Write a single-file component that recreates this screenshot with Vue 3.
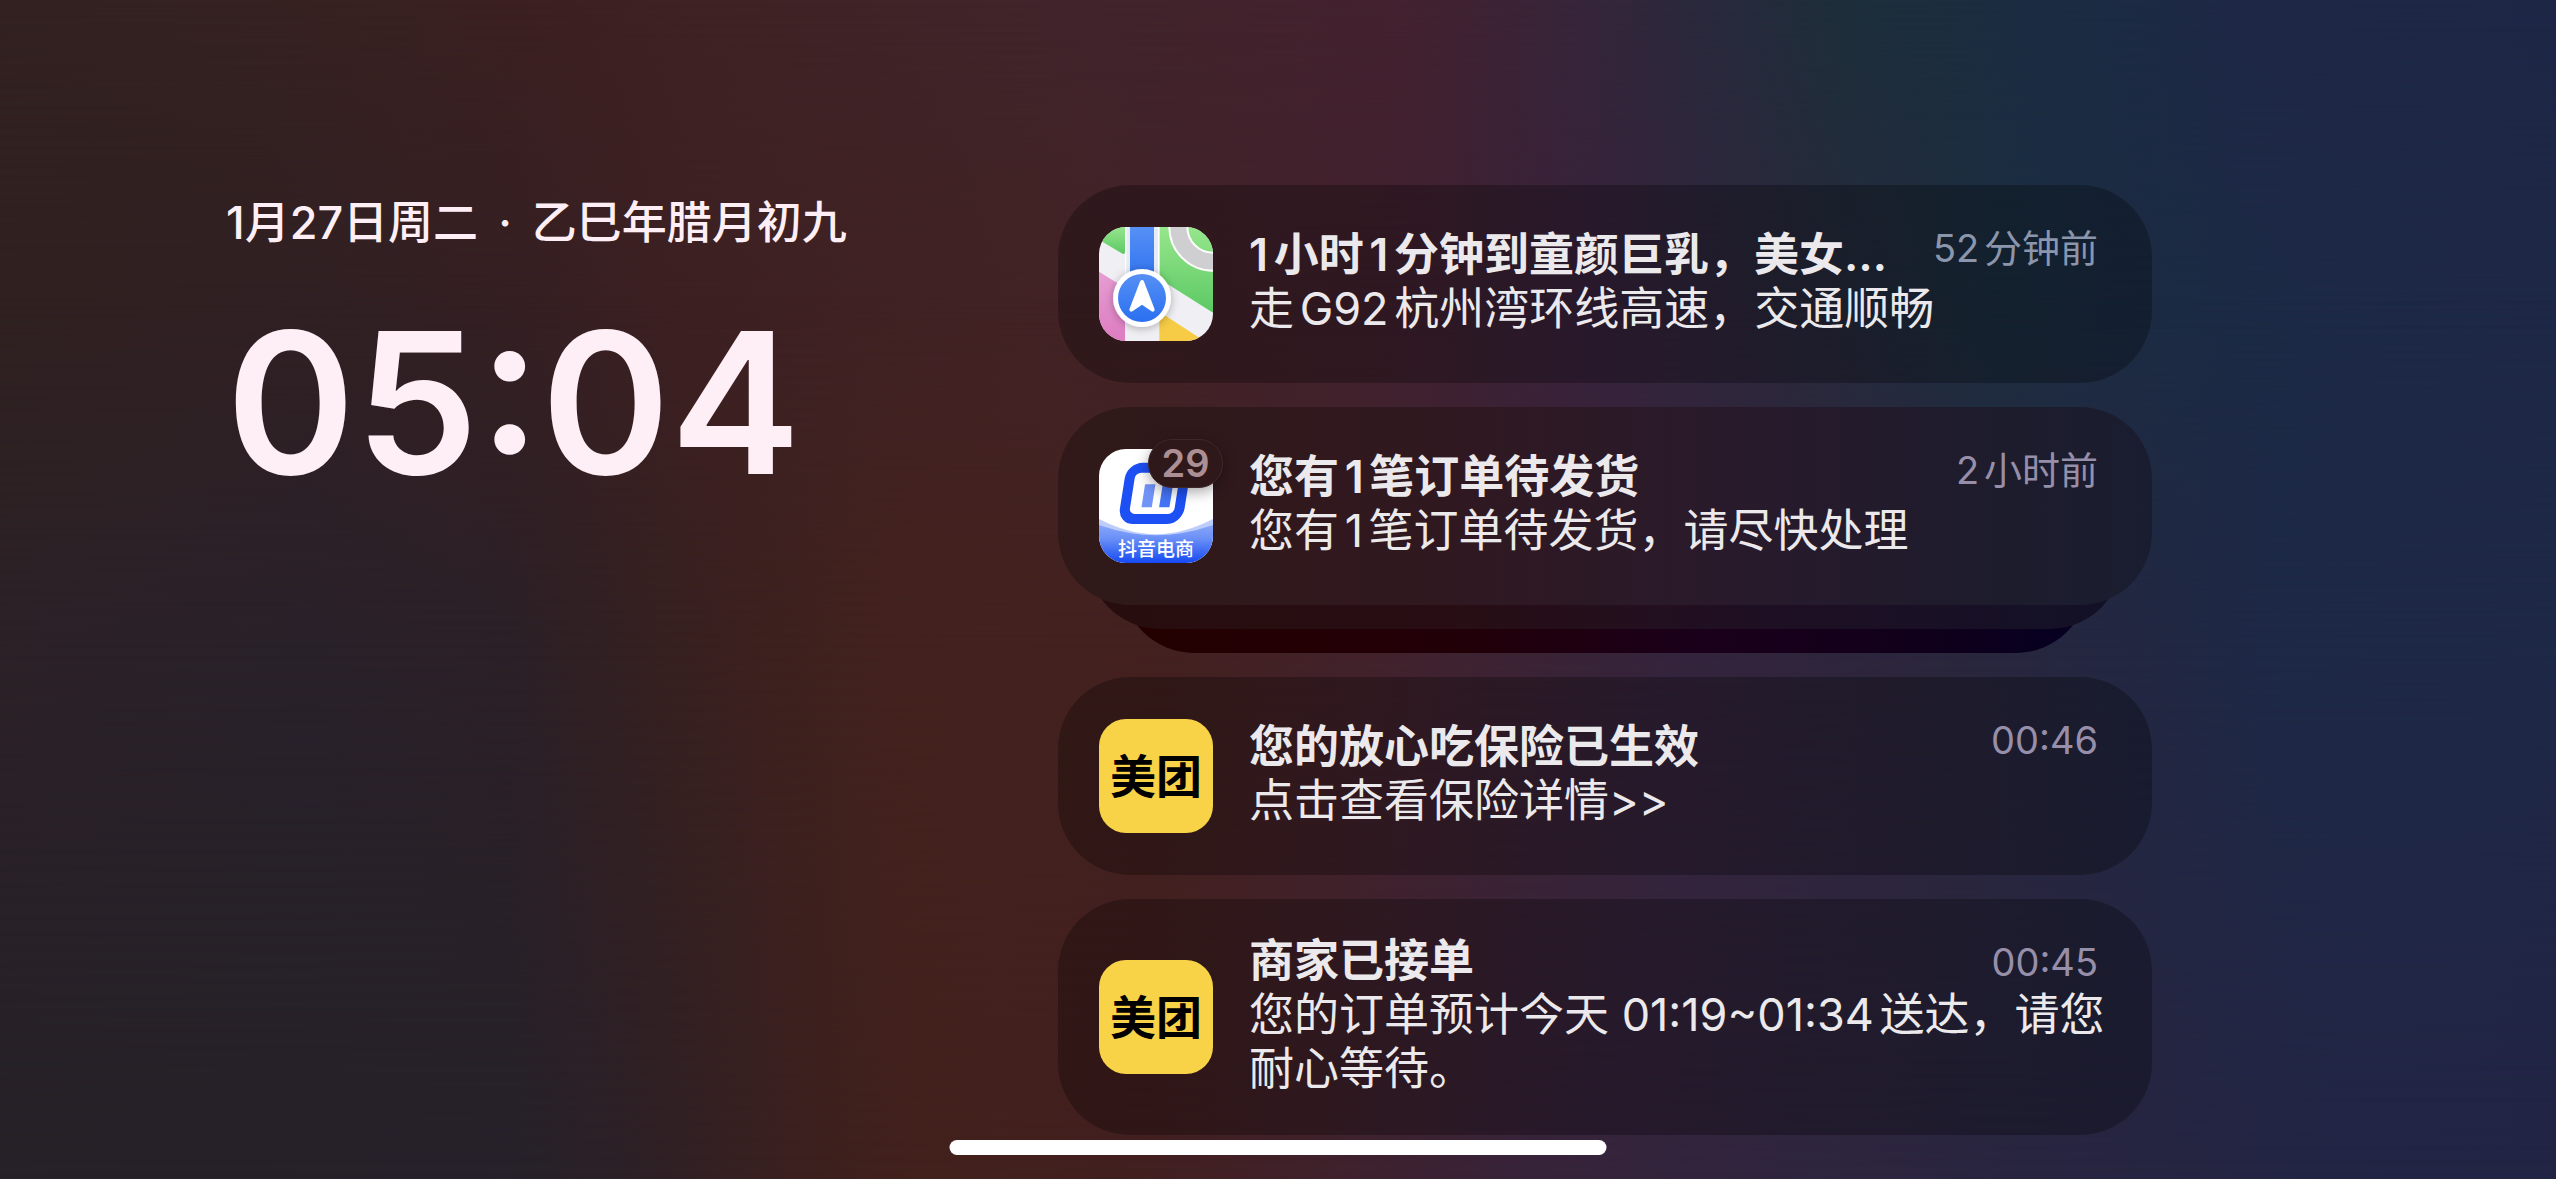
<script setup>
const notifications = [
  {
    id: 1,
    app: 'maps',
    appName: '地图',
    title: '1小时1分钟到童颜巨乳，美女…',
    body: '走G92杭州湾环线高速，交通顺畅',
    time: '52分钟前',
  },
  {
    id: 2,
    app: 'shop',
    appName: '抖音电商',
    title: '您有1笔订单待发货',
    body: '您有1笔订单待发货，请尽快处理',
    time: '2小时前',
    count: 29,
  },
  {
    id: 3,
    app: 'meituan',
    appName: '美团',
    title: '您的放心吃保险已生效',
    body: '点击查看保险详情>>',
    time: '00:46',
  },
  {
    id: 4,
    app: 'meituan',
    appName: '美团',
    title: '商家已接单',
    body: '您的订单预计今天 01:19~01:34送达，请您耐心等待。',
    time: '00:45',
  },
];
</script>

<template>
  <main class="lock">
    <div class="wallpaper" aria-hidden="true">
      <div class="wallpaper__band wallpaper__band--bottom"></div>
      <div class="wallpaper__band wallpaper__band--middle"></div>
      <div class="wallpaper__band wallpaper__band--upper"></div>
      <div class="wallpaper__band wallpaper__band--top"></div>
    </div>

    <header class="clock">
      <p class="clock__date">1月27日周二 <span class="clock__dot">·</span> 乙巳年腊月初九</p>
      <h1 class="clock__time">05:04</h1>
    </header>

    <section class="list" aria-label="通知">
      <div v-for="item in notifications" :key="item.id" class="group" :class="{ 'group--stacked': item.count }">
        <article class="card">
          <div class="card__icon">
            <svg v-if="item.app === 'maps'" class="icon" viewBox="0 0 342 342" role="img" :aria-label="item.appName">
              <defs>
                <linearGradient id="green" x1="0" y1="0" x2="0" y2="1">
                  <stop offset="0" stop-color="#97e68c" />
                  <stop offset="1" stop-color="#5cc964" />
                </linearGradient>
                <linearGradient id="pink" x1="0" y1="0" x2="0" y2="1">
                  <stop offset="0" stop-color="#e79dd2" />
                  <stop offset="1" stop-color="#dd7cc2" />
                </linearGradient>
                <linearGradient id="blue" x1="0" y1="0" x2="0" y2="1">
                  <stop offset="0" stop-color="#5690f5" />
                  <stop offset="1" stop-color="#2a6ff1" />
                </linearGradient>
                <filter id="shade" x="-30%" y="-30%" width="160%" height="160%">
                  <feDropShadow dx="0" dy="4" stdDeviation="12" flood-color="#000" flood-opacity="0.3" />
                </filter>
              </defs>
              <rect width="342" height="342" fill="#f0f0f4" />
              <path d="M0 0H78V74Q78 84 68 79L0 38Z" fill="url(#green)" />
              <path d="M0 134L78 182V342H0Z" fill="url(#pink)" />
              <path d="M181 0H342V257L181 155Z" fill="url(#green)" />
              <path d="M181 254L316 342H181Z" fill="#f6cc46" />
              <circle cx="342" cy="0" r="104" fill="none" stroke="#fff" stroke-width="60" />
              <circle cx="342" cy="0" r="104" fill="none" stroke="#cfcfd2" stroke-width="48" />
              <rect x="78" width="103" height="180" fill="#e6ecf7" />
              <rect x="78" width="4" height="180" fill="#fff" />
              <rect x="177" width="4" height="180" fill="#fff" />
              <rect x="93" width="72" height="180" fill="url(#blue)" />
              <circle cx="129" cy="213" r="87" fill="#fff" filter="url(#shade)" />
              <circle cx="129" cy="213" r="72" fill="url(#blue)" />
              <path
                d="M129 165L97 248L129 226L161 248Z"
                fill="#fff"
                stroke="#fff"
                stroke-width="12"
                stroke-linejoin="round"
              />
            </svg>
            <svg v-else-if="item.app === 'shop'" class="icon" viewBox="0 0 342 342" role="img" :aria-label="item.appName">
              <defs>
                <linearGradient id="wave" x1="0" y1="0" x2="0" y2="1">
                  <stop offset="0" stop-color="#88a6f8" />
                  <stop offset="0.35" stop-color="#6b90f7" />
                  <stop offset="1" stop-color="#164af2" />
                </linearGradient>
              </defs>
              <rect width="342" height="342" fill="#fff" />
              <path d="M0 210Q90 256 171 256T342 210V342H0Z" fill="#bccdfb" />
              <path d="M0 228Q90 259 171 259T342 228V342H0Z" fill="url(#wave)" />
              <g transform="translate(167 133) skewX(-9)">
                <rect x="-82" y="-77" width="164" height="154" rx="32" fill="none" stroke="#1d50f4" stroke-width="30" />
                <rect x="-33" y="-27" width="31" height="69" fill="#7194f7" />
                <rect x="20" y="-27" width="31" height="69" fill="#4474f6" />
              </g>
              <text class="icon__shop" x="171" y="321" text-anchor="middle">抖音电商</text>
            </svg>
            <svg v-else class="icon" viewBox="0 0 342 342" role="img" :aria-label="item.appName">
              <rect width="342" height="342" fill="#f8d247" />
              <text class="icon__meituan" x="171" y="221" text-anchor="middle">美团</text>
            </svg>
            <span v-if="item.count" class="badge">{{ item.count }}</span>
          </div>
          <div class="card__text">
            <h2 class="card__title">{{ item.title }}</h2>
            <p class="card__body">{{ item.body }}</p>
          </div>
          <time class="card__time" :class="{ 'card__time--cool': item.app === 'maps' }">{{ item.time }}</time>
        </article>
        <template v-if="item.count">
          <div class="layer layer--second"></div>
          <div class="layer layer--third"></div>
        </template>
      </div>
    </section>

    <div class="home-indicator"></div>
  </main>
</template>

<style>
body {
  margin: 0;
  background: #2b2127;
}
</style>

<style scoped>
.lock {
  position: relative;
  isolation: isolate;
  box-sizing: border-box;
  min-height: 100vh;
  padding: 185px 404px 44px 226px;
  display: grid;
  grid-template-columns: minmax(0, 832fr) minmax(0, 1094fr);
  align-items: start;
  font-family: Inter, 'Noto Sans CJK SC', sans-serif;
  text-autospace: normal;
  overflow: hidden;
}

.wallpaper {
  position: absolute;
  inset: 0;
  z-index: -1;
}

.wallpaper__band {
  position: absolute;
  inset: 0;
}

.wallpaper__band--bottom {
  background: linear-gradient(90deg, #262128 0%, #26212a 20%, #2d2026 25%, #3b201f 31%, #42211c 36%, #421f20 45%, #40212a 51%, #37233a 60%, #2f253e 70%, #282540 80%, #232544 90%, #222444 100%);
}

.wallpaper__band--middle {
  background: linear-gradient(90deg, #2b2127 0%, #29212a 12%, #2b2027 20%, #38201f 27%, #43221e 35%, #432120 46%, #42222c 54%, #35243c 65%, #2a263c 76%, #222742 84%, #1d2946 89%, #1e2847 100%);
  mask-image: linear-gradient(180deg, #000 55%, transparent 100%);
}

.wallpaper__band--upper {
  background: linear-gradient(90deg, #302120 0%, #302023 12%, #341f22 20%, #3d2022 27%, #422324 40%, #41212e 54%, #38223c 62%, #28293b 71%, #1b2e40 78%, #1c2a45 88%, #1e2847 100%);
  mask-image: linear-gradient(180deg, #000 25%, transparent 55%);
}

.wallpaper__band--top {
  background: linear-gradient(90deg, #332121 0%, #352121 10%, #3b2021 20%, #3f2224 28%, #40242a 40%, #43212f 55%, #36253a 62%, #28293c 67%, #1d2e3a 72%, #1b2c42 80%, #1e2846 88%, #1e2646 100%);
  mask-image: linear-gradient(180deg, #000 0%, transparent 28%);
}

.clock {
  padding-top: 11px;
  color: #fdeff5;
}

.clock__date {
  margin: 0;
  font-size: 45px;
  line-height: 54px;
  font-weight: 500;
  text-autospace: no-autospace;
}

.clock__dot {
  margin: 0 8px;
}

.clock__time {
  margin: 51px 0 0;
  font-size: 196px;
  line-height: 204px;
  font-weight: 600;
}

.list {
  display: grid;
  gap: 24px;
}

.group--stacked {
  isolation: isolate;
}

.card {
  box-sizing: border-box;
  min-height: 198px;
  padding: 35px 44px 35px 41px;
  border-radius: 72px;
  background: rgba(0, 0, 0, 0.27);
  display: grid;
  grid-template-columns: auto minmax(0, 1fr) auto;
  column-gap: 36px;
}

.group--stacked .card {
  position: relative;
  background: linear-gradient(90deg, #301918 0%, #301820 35%, #291a2b 60%, #1c1c2d 88%, #1a1d30 100%);
}

.layer {
  height: 144px;
  margin-top: -120px;
  border-radius: 72px;
}

.layer--second {
  position: relative;
  z-index: -1;
  margin-inline: 30px;
  background: linear-gradient(90deg, #280d0e 0%, #280e14 35%, #200f23 62%, #121127 100%);
}

.layer--third {
  position: relative;
  z-index: -2;
  margin-inline: 64px;
  background: linear-gradient(90deg, #240000 0%, #220008 35%, #1a001b 60%, #12001a 80%, #050022 100%);
}

.card__icon {
  position: relative;
  grid-area: 1 / 1;
  align-self: center;
  width: 114px;
  height: 114px;
}

.icon {
  display: block;
  width: 100%;
  height: 100%;
  border-radius: 27px;
}

.icon__shop {
  fill: #fff;
  font-family: 'Noto Sans CJK SC', sans-serif;
  font-size: 57px;
  font-weight: 500;
}

.icon__meituan {
  fill: #000;
  font-family: 'Noto Sans CJK SC', sans-serif;
  font-size: 138px;
  font-weight: 700;
}

.badge {
  position: absolute;
  top: -10px;
  right: -10px;
  box-sizing: border-box;
  min-width: 75px;
  height: 49px;
  border: 1px solid #40282a;
  border-radius: 24px;
  background: #2f1819;
  box-shadow: 0 4px 14px rgba(0, 0, 0, 0.35);
  color: #ac8f94;
  font-size: 38px;
  line-height: 47px;
  font-weight: 600;
  text-align: center;
}

.card__text {
  grid-area: 1 / 2 / 2 / 4;
  align-self: center;
  padding-bottom: 4px;
  color: #ebe9eb;
  font-size: 45px;
  line-height: 54px;
}

.card__title {
  margin: 0;
  font-size: inherit;
  font-weight: 600;
}

.card__body {
  margin: 0;
}

.card__time {
  grid-area: 1 / 3;
  align-self: start;
  margin-right: 10px;
  color: #978fa9;
  font-size: 38px;
  line-height: 56px;
}

.card__time--cool {
  color: #8b95ac;
}

.home-indicator {
  position: absolute;
  left: 50%;
  bottom: 24px;
  width: 657px;
  height: 15px;
  border-radius: 8px;
  background: #fff;
  transform: translateX(-50%);
}
</style>
